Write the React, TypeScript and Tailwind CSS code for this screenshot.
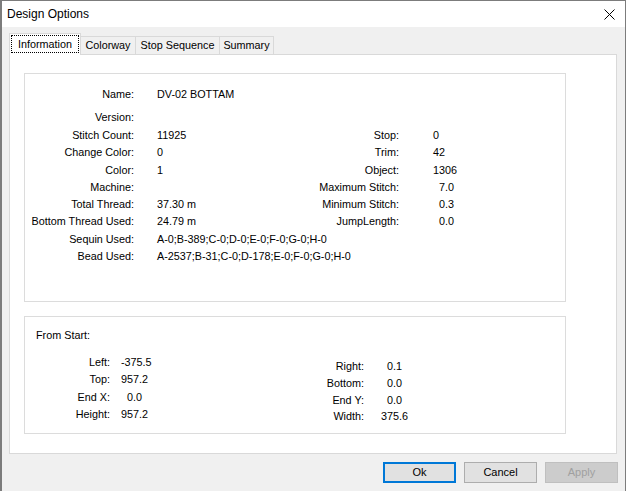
const info: [string, string, string?, string?, string?][] = [
  ['Stitch Count:', '11925', 'Stop:', '0', ''],
  ['Change Color:', '0', 'Trim:', '42', ''],
  ['Color:', '1', 'Object:', '1306', ''],
  ['Machine:', '', 'Maximum Stitch:', '7.0', 'pl-[6px]'],
  ['Total Thread:', '37.30 m', 'Minimum Stitch:', '0.3', 'pl-[6px]'],
  ['Bottom Thread Used:', '24.79 m', 'JumpLength:', '0.0', 'pl-[6px]'],
  ['Sequin Used:', 'A-0;B-389;C-0;D-0;E-0;F-0;G-0;H-0'],
  ['Bead Used:', 'A-2537;B-31;C-0;D-178;E-0;F-0;G-0;H-0'],
]

const startLeft = [
  ['Left:', '-375.5', ''],
  ['Top:', '957.2', ''],
  ['End X:', '0.0', 'pl-[6px]'],
  ['Height:', '957.2', ''],
]

const startRight = [
  ['Right:', '0.1', 'pl-[6px]', 'h-[18px]'],
  ['Bottom:', '0.0', 'pl-[6px]', 'h-[17px]'],
  ['End Y:', '0.0', 'pl-[6px]', 'h-[16px]'],
  ['Width:', '375.6', '', 'h-[17px]'],
]

function Tab({ label, active, width }: { label: string; active?: boolean; width: string }) {
  if (active) {
    return (
      <div
        className={`relative z-10 -mb-px h-[22px] ${width} bg-white border border-b-0 border-[#d9d9d9] flex items-start justify-center pt-[2px]`}
      >
        <span className="outline outline-1 outline-dotted outline-black px-[3px] h-[16px] leading-[16px] w-[66px] text-center">
          {label}
        </span>
      </div>
    )
  }
  return (
    <div
      className={`-ml-px h-[18px] ${width} bg-[#f0f0f0] border border-b-0 border-[#d9d9d9] flex items-center justify-center`}
    >
      {label}
    </div>
  )
}

export default function App() {
  return (
    <div className="w-[626px] h-[491px] flex flex-col bg-[#f0f0f0] border-t border-l-2 border-r border-[#7c7c7c] font-['Liberation_Sans',Arial,sans-serif] text-[10.8px] text-black overflow-hidden">
      {/* title bar */}
      <div className="h-[26px] bg-white flex items-center justify-between pl-[5px] pr-[9px] shrink-0">
        <span className="text-[12px] text-black">Design Options</span>
        <svg width="11" height="11" viewBox="0 0 11 11" className="mr-[1px]">
          <path d="M0.5 0.5L10.5 10.5M10.5 0.5L0.5 10.5" stroke="#000" strokeWidth="1" />
        </svg>
      </div>

      <div className="pt-[6px] pl-[7px] pr-[8px]">
        {/* tabs */}
        <div className="flex items-end h-[21px]">
          <Tab label="Information" active width="w-[72px]" />
          <Tab label="Colorway" width="w-[56px]" />
          <Tab label="Stop Sequence" width="w-[85px]" />
          <Tab label="Summary" width="w-[55px]" />
        </div>

        {/* panel */}
        <div className="h-[400px] bg-white border border-[#d9d9d9] pt-[18px] pl-[14px]">
          <div className="w-[542px] h-[229px] border border-[#dcdcdc] pt-[12px]">
            <div className="flex h-[17px] leading-[17px]">
              <div className="w-[109px] text-right">Name:</div>
              <div className="ml-[23px]">DV-02 BOTTAM</div>
            </div>
            <div className="flex h-[17px] leading-[17px] mt-[6px]">
              <div className="w-[109px] text-right">Version:</div>
            </div>
            <div className="mt-[1px]">
              {info.map(([l, v, rl, rv, pad]) => (
                <div key={l} className="flex h-[17.3px] leading-[17.3px] whitespace-nowrap">
                  <div className="w-[109px] text-right shrink-0">{l}</div>
                  <div className="ml-[23px] w-[150px] shrink-0">{v}</div>
                  {rl && <div className="w-[92px] text-right shrink-0">{rl}</div>}
                  {rl && <div className={`ml-[34px] ${pad}`}>{rv}</div>}
                </div>
              ))}
            </div>
          </div>

          <div className="mt-[14px] w-[542px] h-[118px] border border-[#dcdcdc] pt-[10px]">
            <div className="pl-[11px] h-[17px] leading-[17px]">From Start:</div>
            <div className="flex mt-[10px]">
              <div className="w-[259px]">
                {startLeft.map(([l, v, pad]) => (
                  <div key={l} className="flex h-[17.4px] leading-[17.4px]">
                    <div className="w-[85px] text-right">{l}</div>
                    <div className={`ml-[11px] ${pad}`}>{v}</div>
                  </div>
                ))}
              </div>
              <div className="mt-[3px]">
                {startRight.map(([l, v, pad, h]) => (
                  <div key={l} className={`flex ${h} leading-[17px] items-center`}>
                    <div className="w-[80px] text-right">{l}</div>
                    <div className={`ml-[17px] ${pad}`}>{v}</div>
                  </div>
                ))}
              </div>
            </div>
          </div>
        </div>
      </div>

      {/* buttons */}
      <div className="flex justify-end gap-[8px] pr-[7px] mt-[8px]">
        <button className="w-[73px] h-[21px] bg-[#e1e1e1] border-2 border-[#0078d7] text-[11px] leading-none">
          Ok
        </button>
        <button className="w-[73px] h-[21px] bg-[#e1e1e1] border border-[#adadad] text-[11px] leading-none">
          Cancel
        </button>
        <button className="w-[73px] h-[21px] bg-[#cccccc] border border-[#bfbfbf] text-[11px] text-[#a0a0a0] leading-none">
          Apply
        </button>
      </div>
    </div>
  )
}
